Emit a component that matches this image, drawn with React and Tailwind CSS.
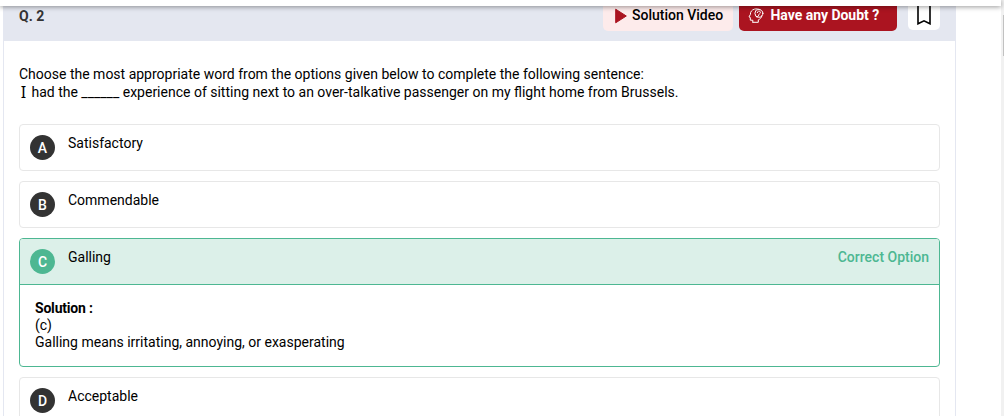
function Badge({ letter, correct }) {
  return (
    <span
      className={`flex h-[25px] w-[25px] shrink-0 items-center justify-center rounded-full text-[14px] font-medium leading-none text-white ${
        correct ? "bg-[#4db792]" : "bg-[#333333]"
      }`}
    >
      {letter}
    </span>
  );
}

function OptionRow({ letter, text, correct }) {
  return (
    <div className="flex h-[45px] items-start pl-[10px] pr-[10px] pt-[10px]">
      <Badge letter={letter} correct={correct} />
      <span className="ml-[13px] grow leading-[17px]">{text}</span>
      {correct && <span className="font-medium leading-[17px] text-[#4db792]">Correct Option</span>}
    </div>
  );
}

function PlainOption({ letter, text }) {
  return (
    <div className="rounded-[4px] border border-[#e7e7e7]">
      <OptionRow letter={letter} text={text} />
    </div>
  );
}

function DoubtIcon() {
  return (
    <svg width="16" height="16" viewBox="0 0 16 16" fill="none" stroke="currentColor" strokeWidth="1" strokeLinecap="round" strokeLinejoin="round" className="mt-px">
      <path d="M12.2 1.9C10.6.9 8.4.6 6.5 1.1 3.8 1.8 2.3 3.9 2.4 6.4L1 8.9l1.3.6v2.7h2.5v1.9M4.8 14.3h5.5v-2.4c1.7-.7 3-2 3.6-3.9" />
      <circle cx="10.9" cy="5.3" r="4" />
      <path d="M9.3 4.6c0-2 3.1-2 3.1-.2 0 1.3-1.6 1.2-1.6 2.7l-1.6 2.2" />
    </svg>
  );
}

function QuestionHeader() {
  return (
    <header className="flex h-[41px] shrink-0 items-start bg-[#e4e7f0] pl-[15px] pr-[15px]">
      <h1 className="grow pt-[8px] text-[14px] font-bold leading-[17px] text-[#333333]">Q. 2</h1>
      <button className="flex h-[31px] w-[130px] items-center rounded-[5px] bg-[#fdebeb] pl-[12px] text-[14px] font-medium text-black">
        <svg width="12" height="16" viewBox="0 0 12 16" className="mt-px">
          <path d="M.7 1.2 11.3 8 .7 14.8z" fill="#ab1420" stroke="#ab1420" strokeWidth="1" strokeLinejoin="round" />
        </svg>
        <span className="ml-[5px]">Solution Video</span>
      </button>
      <button className="ml-[6px] flex h-[31px] w-[158px] items-center rounded-[5px] bg-[#ab1420] pl-[9px] text-[14px] font-bold tracking-[-0.03px] text-white">
        <DoubtIcon />
        <span className="ml-[6.5px]">Have any Doubt ?</span>
      </button>
      <button className="ml-[11px] flex h-[30px] w-[32px] justify-center rounded-[5px] bg-white pt-[4px] text-black">
        <svg width="16" height="21" viewBox="0 0 16 21" fill="none" stroke="currentColor" strokeWidth="1.6">
          <path d="M2 .8h12v19l-6-3-6 3z" />
        </svg>
      </button>
    </header>
  );
}

export default function App() {
  return (
    <div className="relative flex h-[416px] w-[1004px] overflow-hidden bg-white font-[Roboto,sans-serif] text-[14px] text-black">
      <main className="ml-[3px] w-[953px] shrink-0 border-x border-[#e4e7f1]">
        <QuestionHeader />
        <div className="px-[15px]">
          <div className="mt-[24px] leading-[18px]">
            <p>Choose the most appropriate word from the options given below to complete the following sentence:</p>
            <p className="flex h-[18px] whitespace-pre">
              <span className="w-[9px] text-center font-['Noto_Sans',sans-serif] text-[16px]">I</span>
              <span> had the ______ experience of sitting next to an over-talkative passenger on my flight home from Brussels.</span>
            </p>
          </div>
          <div className="mt-[23px] flex flex-col gap-[10px]">
            <PlainOption letter="A" text="Satisfactory" />
            <PlainOption letter="B" text="Commendable" />
            <section className="rounded-[4px] border border-[#4db792]">
              <div className="rounded-t-[3px] border-b border-[#4db792] bg-[#dcf0e9]">
                <OptionRow letter="C" text="Galling" correct />
              </div>
              <div className="h-[81px] px-[15px] pt-[15px] leading-[17px]">
                <p className="font-bold tracking-[-0.2px]">Solution :</p>
                <p>(c)</p>
                <p>Galling means irritating, annoying, or exasperating</p>
              </div>
            </section>
            <PlainOption letter="D" text="Acceptable" />
          </div>
        </div>
      </main>
      <aside className="ml-auto w-[3px] shrink-0 bg-[#f1f1f1] pl-[2px] pt-[15px]">
        <div className="h-[41px] bg-[#c1c1c1]" />
      </aside>
      <div className="absolute left-0 top-0 h-[6px] w-[1001px] bg-white shadow-[0_1px_5px_rgba(0,0,0,0.4)]" />
    </div>
  );
}
